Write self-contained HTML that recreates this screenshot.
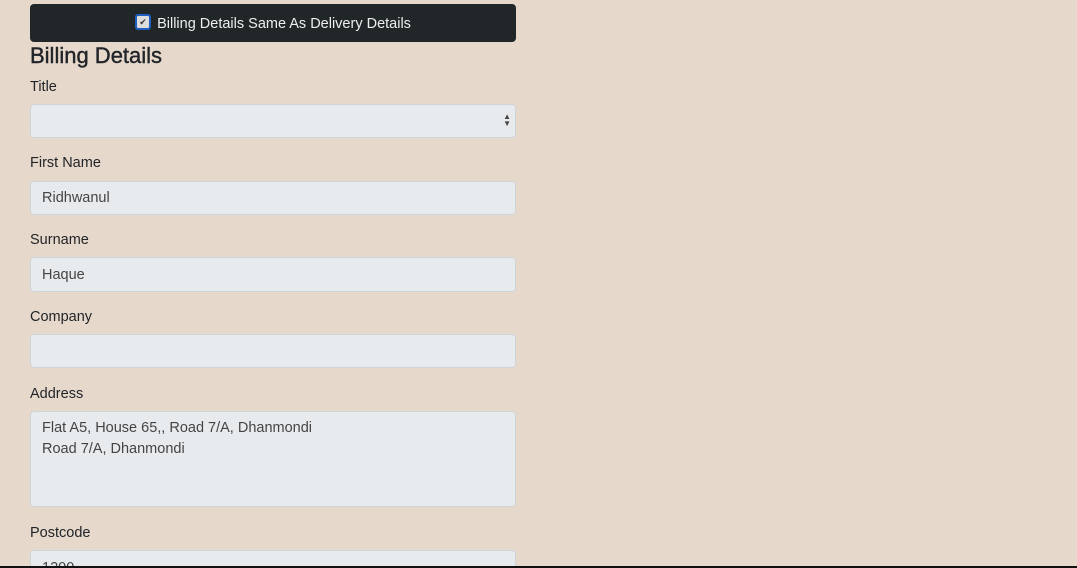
<!DOCTYPE html>
<html style="overflow:hidden;height:568px"><head><style>
body{margin:0;background:#e6d8cb;font-family:"Liberation Sans",sans-serif;color:#212529;width:1077px;height:568px;overflow:hidden;position:relative}
.bar{position:absolute;left:30px;top:4px;width:486px;height:38px;background:#212729;border-radius:4px;color:#eee;font-size:14.5px;display:flex;align-items:center;justify-content:center;padding-top:1px;box-sizing:border-box}
.cb{width:12px;height:12px;border:2px solid #1f5fbf;border-radius:3px;background:#ddd;margin-right:6px;position:relative;top:-2px;font-size:9px;line-height:12px;text-align:center;color:#333}
h2{position:absolute;left:30px;top:43px;margin:0;font-size:22px;font-weight:normal;-webkit-text-stroke:0.4px #212529}
.l{position:absolute;left:30px;font-size:14.5px}
.i{position:absolute;left:30px;width:486px;background:#e8ebee;border:1px solid #cfd4d9;border-radius:4px;font-size:14.5px;color:#444;box-sizing:border-box;padding:0 11px}
.bl{position:absolute;left:0;right:0;top:566px;height:2px;background:#111}
</style></head><body>
<div class="bar"><span class="cb">✔</span>Billing Details Same As Delivery Details</div>
<h2>Billing Details</h2>
<div class="l" style="top:79px">Title</div>
<div class="i" style="top:104px;height:34px"><span style="position:absolute;right:4px;top:8px;font-size:8px;line-height:7px;color:#444">▲<br>▼</span></div>
<div class="l" style="top:155px">First Name</div>
<div class="i" style="top:181px;height:34px;line-height:33px">Ridhwanul</div>
<div class="l" style="top:232px">Surname</div>
<div class="i" style="top:257px;height:35px;line-height:34px">Haque</div>
<div class="l" style="top:309px">Company</div>
<div class="i" style="top:334px;height:34px"></div>
<div class="l" style="top:386px">Address</div>
<div class="i" style="top:411px;height:96px;padding-top:6px;line-height:21px">Flat A5, House 65,, Road 7/A, Dhanmondi<br>Road 7/A, Dhanmondi</div>
<div class="l" style="top:525px">Postcode</div>
<div class="i" style="top:550px;height:34px;line-height:32px;padding-top:1px">1200</div>
<div class="bl"></div>
</body></html>
